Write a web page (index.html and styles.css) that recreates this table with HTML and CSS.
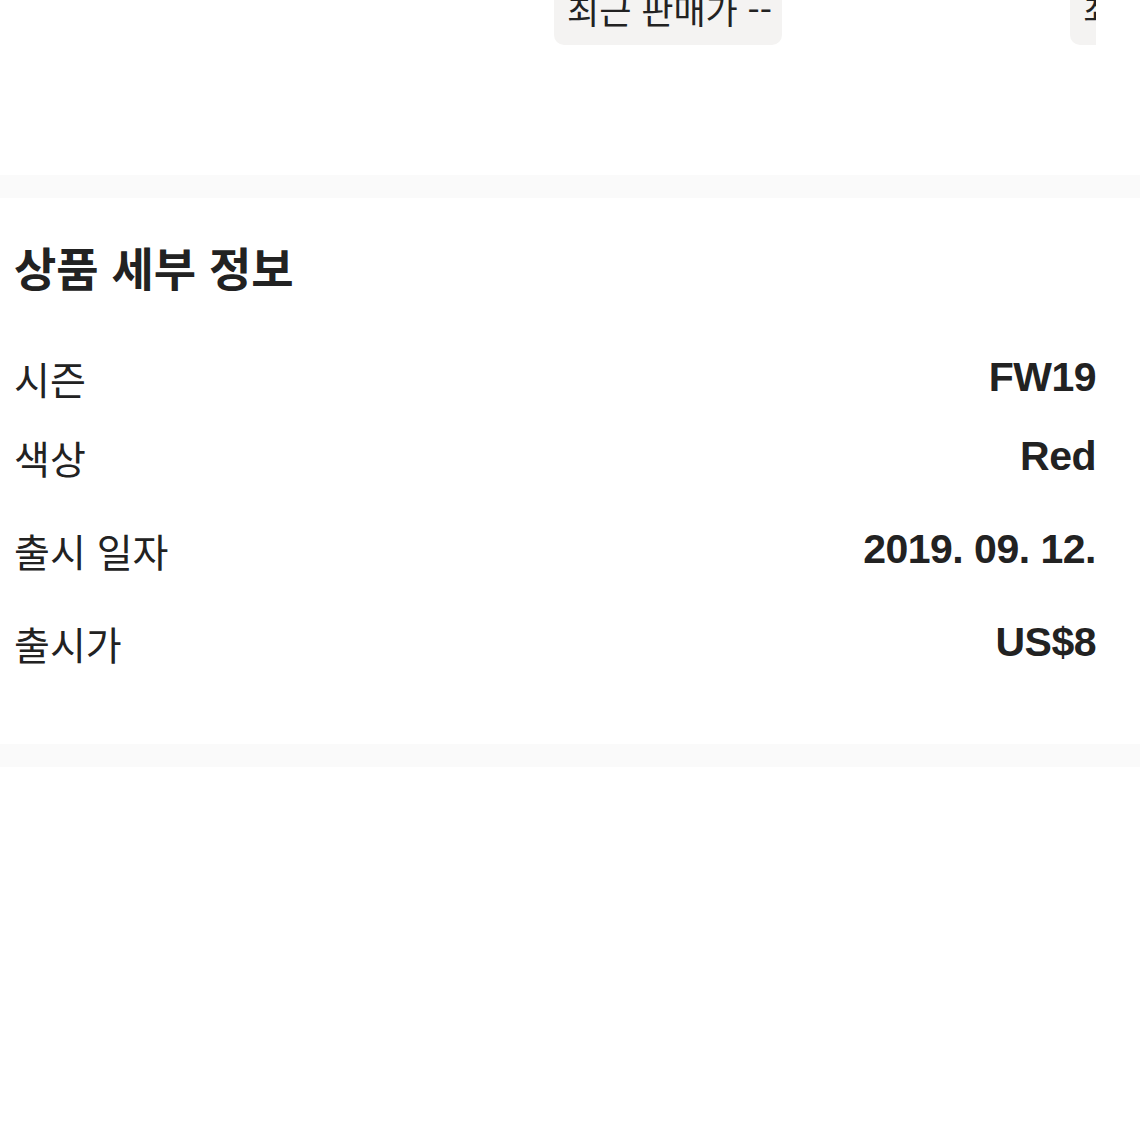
FILE: index.html
```
<!DOCTYPE html>
<html lang="ko">
<head>
    <meta charset="UTF-8">
    <meta name="viewport" content="width=device-width, initial-scale=1.0">
    <title>상품 세부 정보</title>
    <link rel="stylesheet" href="styles.css">
</head>
<body>
    <div class="price-strip">
        <div class="price-track">
            <div class="price-chip">최근 판매가 --</div>
            <div class="price-chip">최근 판매가 --</div>
        </div>
    </div>

    <div class="divider"></div>

    <section class="details">
        <h2>상품 세부 정보</h2>
        <div class="detail-list">
            <div class="detail-row">
                <span class="label">시즌</span>
                <span class="value">FW19</span>
            </div>
            <div class="detail-row">
                <span class="label">색상</span>
                <span class="value">Red</span>
            </div>
            <div class="detail-row">
                <span class="label">출시 일자</span>
                <span class="value">2019. 09. 12.</span>
            </div>
            <div class="detail-row">
                <span class="label">출시가</span>
                <span class="value">US$8</span>
            </div>
        </div>
    </section>

    <div class="divider"></div>
</body>
</html>
```

FILE: styles.css
```
body {
    margin: 0;
    background-color: white;
    color: #222;
    font-family: 'Noto Sans CJK KR', 'Noto Sans', sans-serif;
    overflow: hidden;
}

.price-strip {
    height: 175px;
    margin: 0 44px 0 14px;
    overflow: hidden;
}

.price-track {
    display: flex;
    gap: 288px;
    margin-top: -35px;
    padding-left: 540px;
}

.price-chip {
    flex: none;
    width: 228px;
    height: 80px;
    box-sizing: border-box;
    padding: 24px 0 0 13px;
    background-color: #f4f3f2;
    border-radius: 10px;
    font-size: 35px;
    line-height: 40px;
    white-space: nowrap;
}

.divider {
    height: 23px;
    background-color: #fafafa;
}

.details {
    padding: 40px 44px 69px 14px;
}

.details h2 {
    margin: 0 0 50px;
    font-size: 46px;
    line-height: 57px;
    font-weight: 700;
}

.detail-row {
    display: flex;
    justify-content: space-between;
    align-items: center;
    height: 65px;
    padding-top: 28px;
}

.detail-row:first-child {
    padding-top: 0;
}

.detail-row:nth-child(2) {
    padding-top: 14px;
}

.label {
    font-size: 39px;
}

.value {
    font-family: 'Liberation Sans', 'Inter', sans-serif;
    font-size: 41px;
    font-weight: 700;
    letter-spacing: -0.5px;
}
```
